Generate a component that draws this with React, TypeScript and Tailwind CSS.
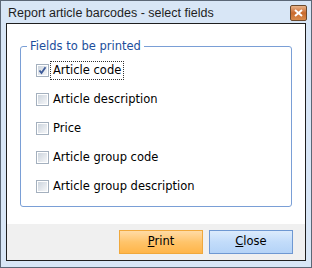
import React from "react";

const fields = [
  { label: "Article code", checked: true },
  { label: "Article description", checked: false },
  { label: "Price", checked: false },
  { label: "Article group code", checked: false },
  { label: "Article group description", checked: false },
];

function CheckBox({ checked }: { checked: boolean }) {
  return (
    <div className="w-[13px] h-[13px] border border-[#a4b0be] bg-white p-[1px] shrink-0">
      <div className="w-full h-full bg-gradient-to-br from-[#cdd5de] to-[#f5f6f8] relative">
        {checked && (
          <svg width="9" height="9" viewBox="0 0 9 9" className="absolute left-0 top-0">
            <path d="M1.5 4.5 L3.5 7 L7.5 1.2" stroke="#3d5a99" strokeWidth="1.8" fill="none" />
          </svg>
        )}
      </div>
    </div>
  );
}

export default function App() {
  return (
    <div
      className="w-[312px] h-[268px] border border-[#5b6776] bg-[#d8e6f6] flex flex-col text-[11.5px] text-black"
      style={{ fontFamily: '"DejaVu Sans", Verdana, sans-serif' }}
    >
      <div className="h-[22px] flex items-center justify-between pl-[7px] pr-[4px]">
        <span
          className="text-[12.5px] text-[#1e1e1e] pt-[2px]"
          style={{ fontFamily: '"Liberation Sans", Arial, sans-serif' }}
        >
          Report article barcodes - select fields
        </span>
        <div className="w-[17px] h-[16px] mt-[2px] rounded-[2px] border border-[#6b4a2e] bg-gradient-to-b from-[#e8b48a] via-[#c96a2c] to-[#d98b4c] flex items-center justify-center">
          <svg width="9" height="8" viewBox="0 0 9 8">
            <path d="M1 1 L8 7 M8 1 L1 7" stroke="#ffffff" strokeWidth="2" />
          </svg>
        </div>
      </div>
      <div className="flex-1 mx-[5px] mb-[6px] border border-[#1f1f1f] flex flex-col">
        <div className="flex-1 bg-white px-[13px] pt-[14px]">
          <fieldset className="border border-[#7a9fd6] rounded-[3px] h-[169px] pl-[15px] pr-[8px]">
            <legend className="ml-[-9px] px-[3px] text-[#1c4e9c]">Fields to be printed</legend>
            <div className="flex flex-col gap-[16px] pt-[9px]">
              {fields.map((f) => (
                <div key={f.label} className="flex items-center h-[13px]">
                  <CheckBox checked={f.checked} />
                  <span
                    className={
                      "ml-[2px] px-[2px] leading-[17px] " +
                      (f.checked ? "outline outline-1 outline-dotted outline-[#333]" : "")
                    }
                  >
                    {f.label}
                  </span>
                </div>
              ))}
            </div>
          </fieldset>
        </div>
        <div className="h-[36px] bg-[#f0f0f0] flex items-center justify-end gap-[6px] pr-[12px] pb-[1px]">
          <button className="w-[84px] h-[24px] border border-[#f0a83c] bg-gradient-to-b from-[#ffdba5] via-[#ffc46a] to-[#ffb548] text-[11.5px] text-black">
            <span className="underline">P</span>rint
          </button>
          <button className="w-[84px] h-[24px] border border-[#6e98d2] bg-gradient-to-b from-[#dcebfc] via-[#c2dcfa] to-[#b4d3f7] text-[11.5px] text-black">
            <span className="underline">C</span>lose
          </button>
        </div>
      </div>
    </div>
  );
}
